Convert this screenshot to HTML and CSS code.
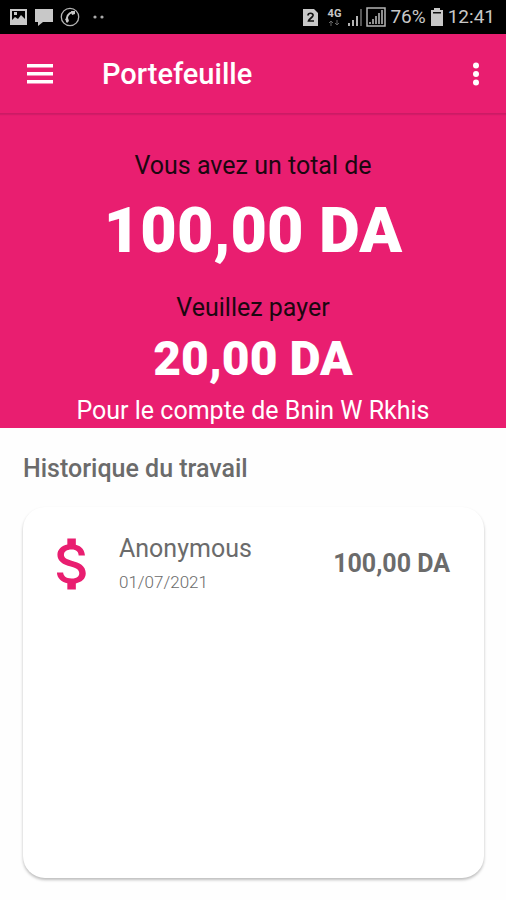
FILE: index.html
```html
<!DOCTYPE html>
<html lang="fr">
<head>
<meta charset="utf-8">
<meta name="viewport" content="width=device-width, initial-scale=1">
<title>Portefeuille</title>
<link rel="stylesheet" href="styles.css">
</head>
<body>
<div class="status">
  <div class="status-left">
    <svg width="18" height="18" viewBox="0 0 18 18" aria-hidden="true"><path fill="#c8c8c8" fill-rule="evenodd" d="M0 1h17v16H0zM2 3v9l3-3 3 2 3-4 4 4V3zM4 4h3v3H4z"/></svg>
    <svg width="18" height="18" viewBox="0 0 18 18" aria-hidden="true"><path fill="#c8c8c8" d="M0 1h18v13H8l-5 4v-4H0z"/></svg>
    <svg width="20" height="20" viewBox="0 0 20 20" aria-hidden="true"><circle cx="10" cy="10" r="8.700" fill="none" stroke="#b4b4b4" stroke-width="1.300"/><path d="M13 5C8 6 6 10 7 15" fill="none" stroke="#c8c8c8" stroke-width="2"/><path fill="#c8c8c8" d="M11 4l4 0 0 3-3 1zM5 12l3-1 1 3-2 2z"/></svg>
    <svg class="more-dots" width="12" height="18" viewBox="0 0 12 18" aria-hidden="true"><circle cx="2" cy="9" r="1.600" fill="#aaa"/><circle cx="9" cy="9" r="1.600" fill="#aaa"/></svg>
  </div>
  <div class="status-right">
    <svg class="sim" width="15" height="17" viewBox="0 0 15 17" aria-hidden="true"><path fill="#c8c8c8" d="M0 0h11l4 4v13H0z"/><path d="M5 6.500C5 3.500 10.500 3.500 10 6.500 9.500 8.500 6 10 5.500 12H11" fill="none" stroke="#111" stroke-width="1.700"/></svg>
    <span class="network"><b>4G</b><svg width="12" height="6" viewBox="0 0 12 6" aria-hidden="true"><path fill="none" stroke="#666" d="M3 6V1M1 3l2-2 2 2M9 0v5M7 3l2 2 2-2"/></svg></span>
    <svg class="signal" width="17" height="18" viewBox="0 0 17 18" aria-hidden="true"><path fill="#b4b4b4" d="M1 15h2v3H1zM5 12h2v6H5zM9 8h2v10H9z"/><path fill="#555" d="M13 1h2v17h-2z"/></svg>
    <svg class="signal-box" width="20" height="20" viewBox="0 0 20 20" aria-hidden="true"><path fill="none" stroke="#b4b4b4" stroke-width="1.500" d="M1 1h18v18H1z"/><path fill="#909090" d="M3 15h2v2H3zM6 12h2v5H6zM9 9h2v8H9zM12 6h2v11h-2zM15 3h2v14h-2z"/></svg>
    <span class="status-text">76%</span>
    <svg class="battery" width="12" height="18" viewBox="0 0 12 18" aria-hidden="true"><path fill="#c8c8c8" d="M3 0h6v2h3v16H0V2h3z"/><path fill="#111" d="M2 4h8v1.500H2z"/></svg>
    <span class="status-text">12:41</span>
  </div>
</div>
<header class="bar">
  <button class="icon-btn menu" aria-label="Menu"><svg width="28" height="20" viewBox="0 0 28 20" aria-hidden="true"><path fill="#fff" d="M1 0h26v3.500H1zM1 8h26v3.500H1zM1 16h26v3.500H1z"/></svg></button>
  <h1 class="title">Portefeuille</h1>
  <button class="icon-btn" aria-label="Plus d'options"><svg width="8" height="24" viewBox="0 0 8 24" aria-hidden="true"><g fill="#fff"><circle cx="4" cy="3.500" r="3"/><circle cx="4" cy="12" r="3"/><circle cx="4" cy="20.500" r="3"/></g></svg></button>
</header>
<main>
  <section class="summary">
    <p class="label">Vous avez un total de</p>
    <p class="total">100,00 DA</p>
    <p class="label">Veuillez payer</p>
    <p class="due">20,00 DA</p>
    <p class="payee">Pour le compte de Bnin W Rkhis</p>
  </section>
  <section class="history">
    <h2 class="heading">Historique du travail</h2>
    <ul class="card">
      <li class="row">
        <svg class="dollar" width="68" height="68" viewBox="0 0 24 24" aria-hidden="true"><path fill="#e91e70" d="M11.800 10.900c-2.270-.59-3-1.200-3-2.150 0-1.090 1.010-1.850 2.700-1.850 1.780 0 2.440.85 2.500 2.100h2.210c-.07-1.720-1.120-3.300-3.210-3.810V3h-3v2.160c-1.940.42-3.500 1.680-3.500 3.610 0 2.310 1.910 3.460 4.700 4.130 2.500.6 3 1.480 3 2.410 0 .69-.49 1.790-2.700 1.790-2.060 0-2.870-.92-2.980-2.100h-2.200c.12 2.190 1.760 3.420 3.680 3.830V21h3v-2.150c1.950-.37 3.500-1.500 3.500-3.550 0-2.840-2.430-3.810-4.700-4.400z"/></svg>
        <div class="who"><span class="name">Anonymous</span><time class="date" datetime="2021-07-01">01/07/2021</time></div>
        <span class="amount">100,00 DA</span>
      </li>
    </ul>
  </section>
</main>
</body>
</html>
```
FILE: styles.css
```css
* { box-sizing: border-box; margin: 0; padding: 0; }
body {
  min-height: 100vh;
  display: flex;
  flex-direction: column;
  background: #fefefe;
  color: #6b6b6b;
  font-family: Roboto, "Liberation Sans", sans-serif;
}
svg { display: block; flex: none; }
.status {
  display: flex;
  justify-content: space-between;
  align-items: center;
  height: 34px;
  padding: 0 11px 0 10px;
  background: #000;
  color: #c8c8c8;
}
.status-left, .status-right { display: flex; align-items: center; }
.status-left { gap: 7px; }
.more-dots { margin-left: 6px; }
.status-text { font-size: 19px; line-height: 24px; }
.sim { margin-right: 10px; }
.network { display: flex; flex-direction: column; align-items: center; margin-right: 6px; }
.network b { font-size: 11px; line-height: 12px; }
.signal { margin-right: 2px; }
.signal-box { margin-right: 4px; }
.battery { margin: 0 5px; }
.bar {
  display: flex;
  align-items: center;
  height: 80px;
  padding: 0 20px 0 16px;
  background: #e91e70;
  color: #fff;
  border-bottom: 1px solid #cb1b65;
  box-shadow: 0 1px 1px #d41b68;
  position: relative;
}
.icon-btn {
  display: grid;
  place-items: center;
  height: 48px;
  padding: 0 6px;
  border: 0;
  background: none;
}
.menu { width: 48px; }
.title { flex: 1; margin-left: 38px; font-size: 29px; line-height: 32px; font-weight: 500; }
.summary {
  padding: 36px 16px 0;
  background: #e91e70;
  color: #fff;
  text-align: center;
}
.label { font-size: 25px; line-height: 32px; color: #1c0710; }
.total { margin: 8px 0 20px; font-size: 63px; line-height: 82px; font-weight: 900; }
.due { font-size: 48px; line-height: 70px; font-weight: 900; }
.payee { font-size: 25px; line-height: 34px; }
main, .history { flex: 1; display: flex; flex-direction: column; }
.history { padding: 25px 22px 22px 23px; }
.heading { font-size: 25px; line-height: 32px; font-weight: 500; }
.card {
  flex: 1;
  margin-top: 22px;
  padding: 23px 34px 20px 16px;
  border-radius: 22px;
  background: #fff;
  box-shadow: 0 2px 3px rgba(0, 0, 0, .26);
  list-style: none;
}
.row { display: flex; align-items: center; }
.who { flex: 1; display: flex; flex-direction: column; margin-left: 12px; }
.name { font-size: 25px; line-height: 36px; }
.date { font-size: 17px; line-height: 30px; font-weight: 300; }
.amount { font-size: 25px; line-height: 32px; font-weight: 700; }
```
